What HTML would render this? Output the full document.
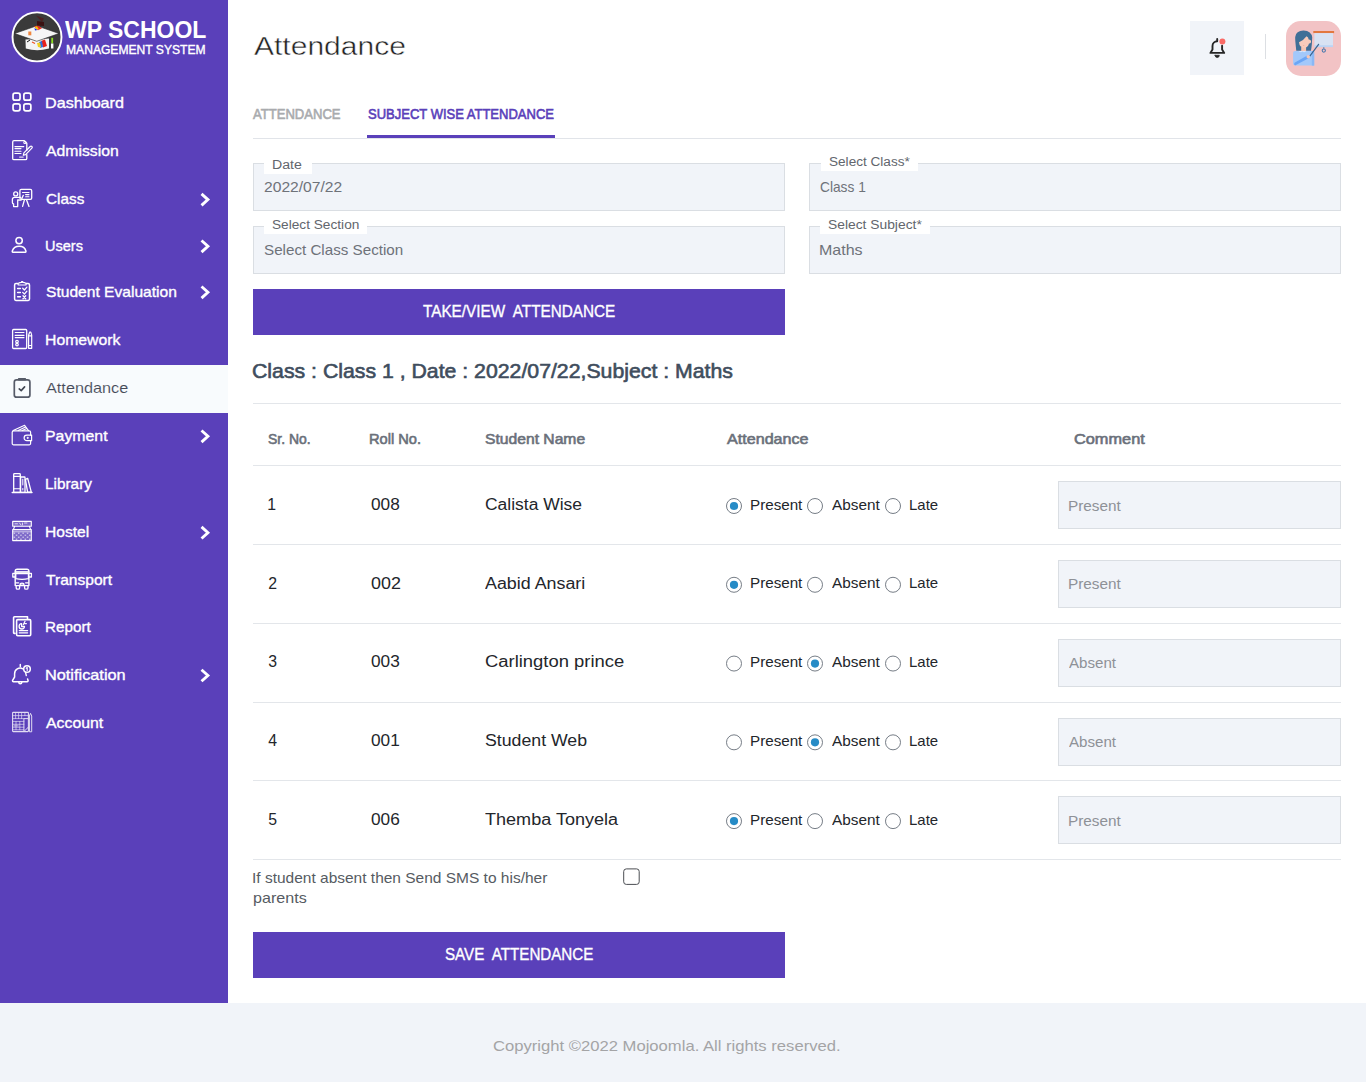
<!DOCTYPE html>
<html><head><meta charset="utf-8">
<style>
*{box-sizing:border-box;margin:0;padding:0}
html,body{width:1366px;height:1084px;overflow:hidden;background:#fff;font-family:"Liberation Sans",sans-serif}
.bx{position:absolute}
.tx{position:absolute;white-space:nowrap;font-family:"Liberation Sans",sans-serif}
svg{position:absolute;left:0;top:0}
</style></head>
<body>
<div class="bx" style="left:0px;top:0px;width:228.00px;height:1003.00px;background:#5a40ba"></div>
<div class="bx" style="left:0px;top:365px;width:228.00px;height:48.00px;background:#f8fbfd"></div>
<div class="bx" style="left:1190px;top:21px;width:54.00px;height:54.00px;background:#f1f4f9"></div>
<div class="bx" style="left:1264.5px;top:34px;width:1.50px;height:25.00px;background:#dcdfe3"></div>
<div class="bx" style="left:1286px;top:21px;width:55.00px;height:55.00px;background:#f2c3c5;border-radius:15px"></div>
<div class="bx" style="left:253px;top:138px;width:1088.00px;height:1.00px;background:#e1e4e9"></div>
<div class="bx" style="left:367px;top:135px;width:188.00px;height:3.00px;background:#5a40ba"></div>
<div class="bx" style="left:253px;top:163px;width:532.00px;height:48.00px;background:#f1f4f9;border:1px solid #dadee3"></div>
<div class="bx" style="left:809px;top:163px;width:532.00px;height:48.00px;background:#f1f4f9;border:1px solid #dadee3"></div>
<div class="bx" style="left:253px;top:226px;width:532.00px;height:48.00px;background:#f1f4f9;border:1px solid #dadee3"></div>
<div class="bx" style="left:809px;top:226px;width:532.00px;height:48.00px;background:#f1f4f9;border:1px solid #dadee3"></div>
<div class="bx" style="left:264px;top:157px;width:48.00px;height:17.00px;background:#fff"></div>
<div class="bx" style="left:821px;top:153px;width:97.00px;height:17.50px;background:#fff"></div>
<div class="bx" style="left:264px;top:217px;width:103.00px;height:16.70px;background:#fff"></div>
<div class="bx" style="left:820px;top:217px;width:110.00px;height:16.70px;background:#fff"></div>
<div class="bx" style="left:253px;top:289px;width:532.00px;height:46.00px;background:#5a40ba"></div>
<div class="bx" style="left:253px;top:403px;width:1088.00px;height:1.00px;background:#e3e6ea"></div>
<div class="bx" style="left:253px;top:465px;width:1088.00px;height:1.00px;background:#e3e6ea"></div>
<div class="bx" style="left:253px;top:544px;width:1088.00px;height:1.00px;background:#e3e6ea"></div>
<div class="bx" style="left:1058px;top:481px;width:283.00px;height:48.00px;background:#f1f4f9;border:1px solid #dadee3"></div>
<div class="bx" style="left:253px;top:623px;width:1088.00px;height:1.00px;background:#e3e6ea"></div>
<div class="bx" style="left:1058px;top:560px;width:283.00px;height:48.00px;background:#f1f4f9;border:1px solid #dadee3"></div>
<div class="bx" style="left:253px;top:702px;width:1088.00px;height:1.00px;background:#e3e6ea"></div>
<div class="bx" style="left:1058px;top:639px;width:283.00px;height:48.00px;background:#f1f4f9;border:1px solid #dadee3"></div>
<div class="bx" style="left:253px;top:780px;width:1088.00px;height:1.00px;background:#e3e6ea"></div>
<div class="bx" style="left:1058px;top:718px;width:283.00px;height:48.00px;background:#f1f4f9;border:1px solid #dadee3"></div>
<div class="bx" style="left:253px;top:859px;width:1088.00px;height:1.00px;background:#e3e6ea"></div>
<div class="bx" style="left:1058px;top:796px;width:283.00px;height:48.00px;background:#f1f4f9;border:1px solid #dadee3"></div>
<div class="bx" style="left:253px;top:932px;width:532.00px;height:46.00px;background:#5a40ba"></div>
<div class="bx" style="left:0px;top:1003px;width:1366.00px;height:78.50px;background:#f1f4f9"></div>
<svg width="1366" height="1084" viewBox="0 0 1366 1084" style="position:absolute;left:0;top:0">
<circle cx="37" cy="36.9" r="24.5" fill="#3a3a3a" stroke="#fff" stroke-width="1.9"/>
<path d="M25.5,39.5 L25.8,48.5 Q37,52 49,48.5 L49,38.5 Z" fill="#f4f4f4"/>
<path d="M14.6,33.5 L36.8,25.8 L59,33.5 L36.8,41.3 Z" fill="#f6f6f6" stroke="#222" stroke-width="0.6"/>
<path d="M34,26.5 L38,25.5 L42,28.2 L38,30.2 Z" fill="#e62a1e"/><path d="M35,26.8 L37,26.2 L39,29.5 L36,29 Z" fill="#f2c90f"/><path d="M34.5,28 L37.5,30 L35,30.5 Z" fill="#1a2be0"/>
<rect x="28.3" y="31.5" width="3" height="3.8" fill="#f07a2a" opacity="0.9"/>
<path d="M41,41 L45,39.5 L47,46 L43,47.5 Z" fill="#e8201a"/><path d="M39,42 L42,41 L43,47 L40,48 Z" fill="#2a6de0"/><path d="M37,43 L40,42.5 L41,47.5 L38,47 Z" fill="#f0d020"/>
<path d="M32,42 L35,43.5" stroke="#f05020" stroke-width="1.2"/><path d="M27,42 L30,40" stroke="#111" stroke-width="1"/>
<rect x="51.3" y="37.8" width="1.8" height="5.5" fill="#8ee020"/><rect x="51" y="43.5" width="2.4" height="5" fill="#fff"/>
<path d="M36,15.5 L44,18.5 L42,22 Z" fill="#5a1010" opacity="0.6"/><path d="M37,21 L44,22 L44,26 L37,25.5 Z" fill="#3a0808" opacity="0.8"/>
<g fill="none" stroke="#fff" stroke-linecap="round" stroke-linejoin="round">
<rect x="13.05" y="93.15" width="7.0" height="7.0" rx="2" stroke-width="1.7"/>
<rect x="13.05" y="103.85" width="7.0" height="7.0" rx="2" stroke-width="1.7"/>
<rect x="23.85" y="93.15" width="7.0" height="7.0" rx="2" stroke-width="1.7"/>
<rect x="23.85" y="103.85" width="7.0" height="7.0" rx="2" stroke-width="1.7"/>
<path d="M24.3,140.7 H14 a1.3,1.3 0 0 0 -1.3,1.3 V158.4 a1.3,1.3 0 0 0 1.3,1.3 H25.5 a1.3,1.3 0 0 0 1.3,-1.3 V154.6 M26.8,150.2 V143.2 L24.3,140.7" stroke-width="1.3"/>
<circle cx="24.9" cy="142.4" r="1.1" stroke-width="1.1"/>
<path d="M14.9,146.6 H23.8 M14.9,148.6 H21 M14.9,151.3 H21 M14.9,153.5 H21" stroke-width="1.1"/>
<path d="M23.3,155.3 L23.9,152.9 L30.2,146.5 a1.2,1.2 0 0 1 1.7,1.7 L25.6,154.6 Z" stroke-width="1.2"/>
<path d="M19.6,157.1 H23.2" stroke-width="1.1" opacity="0.8"/>
<circle cx="15.7" cy="193.9" r="2.0" stroke-width="1.3"/>
<path d="M20.6,197.4 H14.3 a1.9,1.9 0 0 0 -1.9,1.9 V202.6 a1.4,1.4 0 0 0 1.2,1.4 V206.6 H17.7 V199.8 L21.2,200.1 L23.3,195.3" stroke-width="1.3"/>
<rect x="19.9" y="189.4" width="11.8" height="9.9" rx="1.4" stroke-width="1.3"/>
<path d="M22.5,192.5 H29 M25.6,194.6 H29 M25.6,196.7 H29" stroke-width="1.1"/>
<path d="M24.5,199.6 L22.6,206.4 M26.4,199.6 L29.0,206.4" stroke-width="1.3"/>
<circle cx="19.1" cy="240.6" r="3.2" stroke-width="1.5"/>
<path d="M12.9,252.3 H25.3 a0.8,0.8 0 0 0 0.7,-1.1 C25,247.6 22.6,246.3 19.2,246.3 C15.8,246.3 13.4,247.6 12.2,251.2 a0.8,0.8 0 0 0 0.7,1.1 Z" stroke-width="1.5"/>
<path d="M17.6,283.6 H16 a1.4,1.4 0 0 0 -1.4,1.4 V299.1 a1.3,1.3 0 0 0 1.3,1.3 H28.2 a1.3,1.3 0 0 0 1.3,-1.3 V285 a1.4,1.4 0 0 0 -1.4,-1.4 H26.4" stroke-width="1.5"/>
<path d="M18.3,285 L17.9,283.6 Q20,282.4 21.6,282.4 V281.6 H22.8 V282.4 Q24.4,282.4 26.3,283.6 L25.9,285 Z" stroke-width="1.2"/>
<path d="M17.6,288.6 H20.4 M17.6,292.6 H20.4 M17.6,296.8 H20.4" stroke-width="1.5"/>
<path d="M22.7,288.3 L24.4,290 L26.9,287.1 M22.7,292.4 L24.4,294.1 L26.9,291.2" stroke-width="1.3"/>
<path d="M23,295.7 L25.7,298.8 M25.7,295.7 L23,298.8" stroke-width="1.3"/>
<rect x="12.6" y="329.5" width="14.1" height="19" rx="1" stroke-width="1.3"/>
<path d="M15.2,332.5 H24 M15.2,335.4 H24 M15.2,337.6 H24" stroke-width="1.1"/>
<circle cx="17" cy="341.6" r="1.3" stroke-width="1.2"/><circle cx="17" cy="344.6" r="1.3" stroke-width="1.2"/>
<path d="M28.6,348.3 V335.2 L29.6,332.2 H30.8 L31.7,335.2 V348.3 Z M28.6,335.8 H31.7 M28.6,345.5 H31.7" stroke-width="1.2"/>
<path d="M30.6,435.2 V432.2 a1.4,1.4 0 0 0 -1.4,-1.4 H13.6 a1.4,1.4 0 0 0 -1.4,1.4 V443.4 a1.4,1.4 0 0 0 1.4,1.4 H29.2 a1.4,1.4 0 0 0 1.4,-1.4 V440.7" stroke-width="1.2"/>
<path d="M13.2,430.6 L24.6,425.3 L28.5,430.6 M18.2,430.6 L25.5,427.1 M22.2,430.6 L26.8,428.4" stroke-width="1.1"/>
<path d="M31.6,435.1 H26.9 a2.8,2.8 0 0 0 0,5.6 H31.6 Z" stroke-width="1.2"/>
<circle cx="27.6" cy="437.9" r="0.6" fill="#fff" stroke-width="0.8"/>
<rect x="13.7" y="473.6" width="6.6" height="18.7" rx="0.8" stroke-width="1.3"/>
<path d="M13.7,476.4 H20.3 M13.7,488.8 H20.3" stroke-width="1.1"/>
<rect x="20.6" y="477.0" width="4.4" height="15.3" rx="0.5" stroke-width="1.3"/>
<path d="M22.8,479.2 V485 M22.8,488.5 V490" stroke-width="1.0"/>
<path d="M25.4,479.3 L27.7,478.4 L31.3,492.1 H27.6 Z" stroke-width="1.3"/>
<path d="M12.2,492.5 H32" stroke-width="1.4"/>
<rect x="12.7" y="521.4" width="18.6" height="4.9" stroke-width="1.1" fill="#fff" fill-opacity="0.2"/>
<path d="M15,523.8 H17.5 M19.5,523 L21,525 M22.5,523 V525 M24.5,523 H27" stroke-width="0.9" opacity="0.8"/>
<path d="M14.6,526.4 L13.5,529.2 M29.4,526.4 L30.5,529.2" stroke-width="1.1"/>
<rect x="12.7" y="529.6" width="18.6" height="11.0" stroke-width="1.1" fill="#fff" fill-opacity="0.22"/>
<path d="M12.7,531.8 H31.3" stroke-width="0.9" opacity="0.7"/>
</g>
<rect x="13.60" y="532.60" width="1.5" height="1.3" fill="#fff" opacity="0.6"/>
<rect x="18.00" y="532.60" width="1.5" height="1.3" fill="#fff" opacity="0.6"/>
<rect x="22.40" y="532.60" width="1.5" height="1.3" fill="#fff" opacity="0.6"/>
<rect x="26.80" y="532.60" width="1.5" height="1.3" fill="#fff" opacity="0.6"/>
<rect x="15.80" y="534.60" width="1.5" height="1.3" fill="#fff" opacity="0.6"/>
<rect x="20.20" y="534.60" width="1.5" height="1.3" fill="#fff" opacity="0.6"/>
<rect x="24.60" y="534.60" width="1.5" height="1.3" fill="#fff" opacity="0.6"/>
<rect x="29.00" y="534.60" width="1.5" height="1.3" fill="#fff" opacity="0.6"/>
<rect x="13.60" y="536.60" width="1.5" height="1.3" fill="#fff" opacity="0.6"/>
<rect x="18.00" y="536.60" width="1.5" height="1.3" fill="#fff" opacity="0.6"/>
<rect x="22.40" y="536.60" width="1.5" height="1.3" fill="#fff" opacity="0.6"/>
<rect x="26.80" y="536.60" width="1.5" height="1.3" fill="#fff" opacity="0.6"/>
<rect x="15.80" y="538.60" width="1.5" height="1.3" fill="#fff" opacity="0.6"/>
<rect x="20.20" y="538.60" width="1.5" height="1.3" fill="#fff" opacity="0.6"/>
<rect x="24.60" y="538.60" width="1.5" height="1.3" fill="#fff" opacity="0.6"/>
<rect x="29.00" y="538.60" width="1.5" height="1.3" fill="#fff" opacity="0.6"/>
<g fill="none" stroke="#fff" stroke-linecap="round" stroke-linejoin="round">
<path d="M15.2,585.6 V571.3 a2,2 0 0 1 2,-2 H26.9 a2,2 0 0 1 2,2 V585.6 Z" stroke-width="1.4"/>
<path d="M15.6,572 H28.6" stroke-width="1.8" opacity="0.85"/>
<path d="M15.8,573.6 H28.4 V578.6 Q22,580 15.8,578.6 Z" stroke-width="1.2"/>
<path d="M15,573.4 H12.8 V577 H15 M29.1,573.4 H31.4 V577 H29.1" stroke-width="1.3"/>
<path d="M15.8,582.8 H18.6 M25.6,582.8 H28.4" stroke-width="1.2"/>
<ellipse cx="22" cy="584.2" rx="2.1" ry="1.0" stroke-width="1.2"/>
<path d="M16.2,585.8 V587.9 a1.3,1.3 0 0 0 1.3,1.3 H18.3 a1.3,1.3 0 0 0 1.3,-1.3 V585.8 M24.6,585.8 V587.9 a1.3,1.3 0 0 0 1.3,1.3 H26.7 a1.3,1.3 0 0 0 1.3,-1.3 V585.8" stroke-width="1.3"/>
<path d="M15,633.4 H14.2 a0.6,0.6 0 0 1 -0.6,-0.6 V617.7 a0.9,0.9 0 0 1 0.9,-0.9 H27.5 V618.9" stroke-width="1.6"/>
<rect x="16.6" y="619.6" width="14.1" height="16.1" rx="1.1" stroke-width="1.6"/>
<path d="M21.6,623.6 a2.7,2.7 0 1 0 2.9,2.9 H21.6 Z" stroke-width="1.3"/>
<path d="M23.4,624.6 L25,621.3 M24.6,623.6 L26.4,623.6" stroke-width="1.2"/>
<path d="M19.3,630.6 H27.6 M19.3,632.8 H27.6" stroke-width="1.3"/>
<path d="M22.8,668.8 A5.6,5.6 0 0 0 14.6,673.8 V677 L12.6,680.4 a1,1 0 0 0 0.9,1.4 H27.1 a1,1 0 0 0 0.9,-1.4 L27.6,679" stroke-width="1.5"/>
<path d="M20.3,666.5 V664.6 M18.8,682.2 a1.5,1.5 0 0 0 3,0" stroke-width="1.5"/>
<circle cx="27" cy="669" r="3.3" stroke-width="1.5"/>
<path d="M26.2,668.2 L27.2,667.4 V670.4" stroke-width="1.1"/>
<path d="M25.5,672.2 L26.3,675.6" stroke-width="1.4"/>
<g opacity="0.82">
<rect x="12.6" y="712.4" width="15.8" height="19.2" rx="0.6" stroke-width="1.1"/>
<path d="M28.2,718.6 H23.9 V731.6" stroke-width="1.0"/>
<path d="M12.6,715.6 H28.2 M12.6,718.6 H23.9 M12.6,721.4 H23.9 M12.6,724.3 H23.9 M12.6,727.2 H23.9 M12.6,729.8 H23.9" stroke-width="0.7"/>
<path d="M15.6,712.4 V718.6 M18.6,712.4 V718.6 M21.6,712.4 V718.6 M24.9,712.4 V715.6 M16,721.4 V729.8 M19.8,721.4 V729.8" stroke-width="0.7"/>
<rect x="13.6" y="725" width="5" height="1.6" fill="#fff" opacity="0.5" stroke="none"/>
<path d="M29.4,731.4 V716 L30.5,713.3 L31.7,716 V731.4 Z" stroke-width="1.0"/>
<path d="M24.5,731 L28.5,727" stroke-width="1.0"/>
</g>
</g>
<g fill="none" stroke="#565b68" stroke-linecap="round" stroke-linejoin="round">
<rect x="14.3" y="379.9" width="15.6" height="17.3" rx="2.3" stroke-width="1.7"/>
</g>
<rect x="17.9" y="377.9" width="8.2" height="2.6" rx="0.9" fill="#565b68"/>
<path d="M19.2,388.9 L21.2,390.6 L24.6,386.9" fill="none" stroke="#3f4450" stroke-width="1.6" stroke-linecap="round" stroke-linejoin="round"/>
<path d="M202.6,194.80 L207.9,199.60 L202.6,204.40" fill="none" stroke="#fff" stroke-width="2.9" stroke-linecap="square" stroke-linejoin="miter"/>
<path d="M202.6,241.50 L207.9,246.30 L202.6,251.10" fill="none" stroke="#fff" stroke-width="2.9" stroke-linecap="square" stroke-linejoin="miter"/>
<path d="M202.6,287.50 L207.9,292.30 L202.6,297.10" fill="none" stroke="#fff" stroke-width="2.9" stroke-linecap="square" stroke-linejoin="miter"/>
<path d="M202.6,431.50 L207.9,436.30 L202.6,441.10" fill="none" stroke="#fff" stroke-width="2.9" stroke-linecap="square" stroke-linejoin="miter"/>
<path d="M202.6,527.90 L207.9,532.70 L202.6,537.50" fill="none" stroke="#fff" stroke-width="2.9" stroke-linecap="square" stroke-linejoin="miter"/>
<path d="M202.6,670.70 L207.9,675.50 L202.6,680.30" fill="none" stroke="#fff" stroke-width="2.9" stroke-linecap="square" stroke-linejoin="miter"/>
<g fill="none" stroke="#262626" stroke-linecap="round" stroke-linejoin="round">
<path d="M1217.2,38.9 V40.9 M1217.2,41.3 A4.7,4.7 0 0 0 1212.5,46 V49.6 L1210.4,52.9 H1224.2 L1222.1,49.6 V45.8" stroke-width="1.9"/>
<path d="M1215.1,55.3 H1219.3 A2.1,2.2 0 0 1 1215.1,55.3 Z" fill="#262626" stroke="#262626" stroke-width="0.8"/>
</g>
<circle cx="1222.4" cy="41.4" r="3.0" fill="#fa6a66"/>
<rect x="1313.3" y="31" width="20.8" height="2.1" fill="#e2773f"/>
<rect x="1314.4" y="33.1" width="18.6" height="13.9" fill="#d8e2f3"/>
<rect x="1314.4" y="45.2" width="18.6" height="1.9" fill="#bcd4f4"/>
<path d="M1323.8,47 V49" stroke="#4b79ad" stroke-width="0.8"/>
<circle cx="1323.8" cy="50.6" r="1.6" fill="none" stroke="#4b79ad" stroke-width="1.1"/>
<path d="M1296.3,50.7 Q1295,40 1295.2,37 Q1296,30.5 1303.5,30.5 Q1311.5,30.8 1312.2,37.5 Q1312.2,43 1311,50.7 Z" fill="#3f6f97"/>
<path d="M1301.2,47 H1306.1 V51.3 H1301.2 Z" fill="#f6c4b2"/>
<path d="M1299,42.3 Q1303.5,40.5 1306.5,36.3 Q1308.5,37 1308.7,39.5 Q1311.5,39.8 1311,42.2 Q1310.3,43.8 1309,43.5 Q1307.8,47.8 1304,47.9 Q1299.5,47.5 1299,42.3 Z" fill="#f8cbbb"/>
<path d="M1302.8,45 Q1303.6,45.8 1304.6,45 Z" fill="#e08b7c"/>
<path d="M1293.1,53 Q1293.1,50.9 1295.3,50.9 H1312 Q1314.2,50.9 1314.2,53 V65.6 H1295.5 Q1293.1,65.6 1293.1,63.5 Z" fill="#a2c8fa"/>
<path d="M1298.5,51 Q1300.5,53 1302.5,51.5 Q1304.5,53 1306.5,51 Z" fill="#d6e6fb"/>
<rect x="1311.8" y="51" width="2.4" height="14.6" fill="#8ab8f6"/>
<path d="M1295,65.4 Q1293.3,64.5 1294.5,62.8 L1307.3,55.6 L1308.6,58.2 Z" fill="#6ba6f6"/>
<path d="M1310,55.8 L1318.6,44.3" stroke="#3a6590" stroke-width="1.2" fill="none" stroke-linecap="round"/>
<circle cx="1308.2" cy="56.8" r="1.7" fill="#f8c7b5"/>
<circle cx="734.0" cy="506.00" r="7.5" fill="#fff" stroke="#767d86" stroke-width="1"/>
<circle cx="734.0" cy="506.00" r="4.1" fill="#268bc6"/>
<circle cx="815.0" cy="506.00" r="7.5" fill="#fff" stroke="#767d86" stroke-width="1"/>
<circle cx="893.0" cy="506.00" r="7.5" fill="#fff" stroke="#767d86" stroke-width="1"/>
<circle cx="734.0" cy="584.78" r="7.5" fill="#fff" stroke="#767d86" stroke-width="1"/>
<circle cx="734.0" cy="584.78" r="4.1" fill="#268bc6"/>
<circle cx="815.0" cy="584.78" r="7.5" fill="#fff" stroke="#767d86" stroke-width="1"/>
<circle cx="893.0" cy="584.78" r="7.5" fill="#fff" stroke="#767d86" stroke-width="1"/>
<circle cx="734.0" cy="663.56" r="7.5" fill="#fff" stroke="#767d86" stroke-width="1"/>
<circle cx="815.0" cy="663.56" r="7.5" fill="#fff" stroke="#767d86" stroke-width="1"/>
<circle cx="815.0" cy="663.56" r="4.1" fill="#268bc6"/>
<circle cx="893.0" cy="663.56" r="7.5" fill="#fff" stroke="#767d86" stroke-width="1"/>
<circle cx="734.0" cy="742.34" r="7.5" fill="#fff" stroke="#767d86" stroke-width="1"/>
<circle cx="815.0" cy="742.34" r="7.5" fill="#fff" stroke="#767d86" stroke-width="1"/>
<circle cx="815.0" cy="742.34" r="4.1" fill="#268bc6"/>
<circle cx="893.0" cy="742.34" r="7.5" fill="#fff" stroke="#767d86" stroke-width="1"/>
<circle cx="734.0" cy="821.12" r="7.5" fill="#fff" stroke="#767d86" stroke-width="1"/>
<circle cx="734.0" cy="821.12" r="4.1" fill="#268bc6"/>
<circle cx="815.0" cy="821.12" r="7.5" fill="#fff" stroke="#767d86" stroke-width="1"/>
<circle cx="893.0" cy="821.12" r="7.5" fill="#fff" stroke="#767d86" stroke-width="1"/>
<rect x="623.7" y="868.9" width="15.5" height="15.5" rx="2.6" fill="#fff" stroke="#4a4d52" stroke-width="1"/>
</svg>
<div class="tx" style="left:44.82px;top:93.80px;font-size:15px;line-height:18px;font-weight:400;color:#ffffff;transform:scaleX(1.0758);transform-origin:0 0;-webkit-text-stroke:0.35px #ffffff;">Dashboard</div>
<div class="tx" style="left:45.90px;top:142.10px;font-size:15px;line-height:18px;font-weight:400;color:#ffffff;transform:scaleX(1.0501);transform-origin:0 0;-webkit-text-stroke:0.35px #ffffff;">Admission</div>
<div class="tx" style="left:45.90px;top:190.10px;font-size:15px;line-height:18px;font-weight:400;color:#ffffff;transform:scaleX(1.0214);transform-origin:0 0;-webkit-text-stroke:0.35px #ffffff;">Class</div>
<div class="tx" style="left:44.93px;top:236.80px;font-size:15px;line-height:18px;font-weight:400;color:#ffffff;transform:scaleX(0.9689);transform-origin:0 0;-webkit-text-stroke:0.35px #ffffff;">Users</div>
<div class="tx" style="left:45.90px;top:282.80px;font-size:15px;line-height:18px;font-weight:400;color:#ffffff;transform:scaleX(1.0392);transform-origin:0 0;-webkit-text-stroke:0.35px #ffffff;">Student Evaluation</div>
<div class="tx" style="left:44.85px;top:330.80px;font-size:15px;line-height:18px;font-weight:400;color:#ffffff;transform:scaleX(1.0508);transform-origin:0 0;-webkit-text-stroke:0.35px #ffffff;">Homework</div>
<div class="tx" style="left:46.10px;top:378.90px;font-size:15px;line-height:18px;font-weight:400;color:#454a57;transform:scaleX(1.0840);transform-origin:0 0;-webkit-text-stroke:0.12px #f8fbfd;">Attendance</div>
<div class="tx" style="left:44.84px;top:426.80px;font-size:15px;line-height:18px;font-weight:400;color:#ffffff;transform:scaleX(1.0571);transform-origin:0 0;-webkit-text-stroke:0.35px #ffffff;">Payment</div>
<div class="tx" style="left:44.88px;top:475.20px;font-size:15px;line-height:18px;font-weight:400;color:#ffffff;transform:scaleX(1.0232);transform-origin:0 0;-webkit-text-stroke:0.35px #ffffff;">Library</div>
<div class="tx" style="left:44.86px;top:523.20px;font-size:15px;line-height:18px;font-weight:400;color:#ffffff;transform:scaleX(1.0368);transform-origin:0 0;-webkit-text-stroke:0.35px #ffffff;">Hostel</div>
<div class="tx" style="left:45.90px;top:570.80px;font-size:15px;line-height:18px;font-weight:400;color:#ffffff;transform:scaleX(1.0393);transform-origin:0 0;-webkit-text-stroke:0.35px #ffffff;">Transport</div>
<div class="tx" style="left:44.89px;top:618.40px;font-size:15px;line-height:18px;font-weight:400;color:#ffffff;transform:scaleX(1.0144);transform-origin:0 0;-webkit-text-stroke:0.35px #ffffff;">Report</div>
<div class="tx" style="left:44.81px;top:666.00px;font-size:15px;line-height:18px;font-weight:400;color:#ffffff;transform:scaleX(1.0870);transform-origin:0 0;-webkit-text-stroke:0.35px #ffffff;">Notification</div>
<div class="tx" style="left:45.90px;top:713.80px;font-size:15px;line-height:18px;font-weight:400;color:#ffffff;transform:scaleX(1.0558);transform-origin:0 0;-webkit-text-stroke:0.35px #ffffff;">Account</div>
<div class="tx" style="left:65.20px;top:15.62px;font-size:23.6px;line-height:28px;font-weight:700;color:#fff;transform:scaleX(0.9746);transform-origin:0 0;">WP SCHOOL</div>
<div class="tx" style="left:66.00px;top:43.44px;font-size:12.0px;line-height:14px;font-weight:400;color:#fff;transform:scaleX(1.0081);transform-origin:0 0;-webkit-text-stroke:0.35px #fff;">MANAGEMENT SYSTEM</div>
<div class="tx" style="left:254.00px;top:31.20px;font-size:25.1px;line-height:30px;font-weight:400;color:#222222;transform:scaleX(1.1960);transform-origin:0 0;-webkit-text-stroke:0.45px #fff;">Attendance</div>
<div class="tx" style="left:253.20px;top:105.78px;font-size:14.5px;line-height:17px;font-weight:400;color:#a9abae;transform:scaleX(0.9002);transform-origin:0 0;-webkit-text-stroke:0.6px #a9abae;">ATTENDANCE</div>
<div class="tx" style="left:367.80px;top:105.78px;font-size:14.5px;line-height:17px;font-weight:400;color:#5a40ba;transform:scaleX(0.8969);transform-origin:0 0;-webkit-text-stroke:0.6px #5a40ba;">SUBJECT WISE ATTENDANCE</div>
<div class="tx" style="left:272.25px;top:158.04px;font-size:12.3px;line-height:15px;font-weight:400;color:#62666d;transform:scaleX(1.1498);transform-origin:0 0;">Date</div>
<div class="tx" style="left:828.80px;top:155.14px;font-size:12.3px;line-height:15px;font-weight:400;color:#62666d;transform:scaleX(1.1044);transform-origin:0 0;">Select Class*</div>
<div class="tx" style="left:272.00px;top:218.04px;font-size:12.3px;line-height:15px;font-weight:400;color:#62666d;transform:scaleX(1.1108);transform-origin:0 0;">Select Section</div>
<div class="tx" style="left:827.50px;top:218.04px;font-size:12.3px;line-height:15px;font-weight:400;color:#62666d;transform:scaleX(1.1243);transform-origin:0 0;">Select Subject*</div>
<div class="tx" style="left:263.90px;top:177.94px;font-size:14.6px;line-height:18px;font-weight:400;color:#6e7279;transform:scaleX(1.0710);transform-origin:0 0;">2022/07/22</div>
<div class="tx" style="left:820.20px;top:177.74px;font-size:14.6px;line-height:18px;font-weight:400;color:#6e7279;transform:scaleX(0.9414);transform-origin:0 0;">Class 1</div>
<div class="tx" style="left:264.20px;top:240.64px;font-size:14.6px;line-height:18px;font-weight:400;color:#6e7279;transform:scaleX(1.0402);transform-origin:0 0;">Select Class Section</div>
<div class="tx" style="left:819.10px;top:240.84px;font-size:14.6px;line-height:18px;font-weight:400;color:#6e7279;transform:scaleX(1.0977);transform-origin:0 0;">Maths</div>
<div class="tx" style="left:422.70px;top:301.96px;font-size:16px;line-height:19px;font-weight:400;color:#fff;transform:scaleX(0.9552);transform-origin:0 0;-webkit-text-stroke:0.35px #fff;">TAKE/VIEW  ATTENDANCE</div>
<div class="tx" style="left:252.25px;top:358.80px;font-size:20.2px;line-height:24px;font-weight:400;color:#404d5d;transform:scaleX(1.0531);transform-origin:0 0;-webkit-text-stroke:0.6px #404d5d;">Class : Class 1 , Date : 2022/07/22,Subject : Maths</div>
<div class="tx" style="left:267.80px;top:430.44px;font-size:14.6px;line-height:18px;font-weight:400;color:#6a707a;transform:scaleX(0.9552);transform-origin:0 0;-webkit-text-stroke:0.6px #6a707a;">Sr. No.</div>
<div class="tx" style="left:369.40px;top:430.44px;font-size:14.6px;line-height:18px;font-weight:400;color:#6a707a;transform:scaleX(1.0030);transform-origin:0 0;-webkit-text-stroke:0.6px #6a707a;">Roll No.</div>
<div class="tx" style="left:484.80px;top:430.44px;font-size:14.6px;line-height:18px;font-weight:400;color:#6a707a;transform:scaleX(1.0732);transform-origin:0 0;-webkit-text-stroke:0.6px #6a707a;">Student Name</div>
<div class="tx" style="left:726.80px;top:430.44px;font-size:14.6px;line-height:18px;font-weight:400;color:#6a707a;transform:scaleX(1.1042);transform-origin:0 0;-webkit-text-stroke:0.6px #6a707a;">Attendance</div>
<div class="tx" style="left:1073.50px;top:430.44px;font-size:14.6px;line-height:18px;font-weight:400;color:#6a707a;transform:scaleX(1.1186);transform-origin:0 0;-webkit-text-stroke:0.6px #6a707a;">Comment</div>
<div class="tx" style="left:267.30px;top:494.93px;font-size:15.8px;line-height:19px;font-weight:400;color:#23262b;">1</div>
<div class="tx" style="left:371.00px;top:494.93px;font-size:15.8px;line-height:19px;font-weight:400;color:#23262b;transform:scaleX(1.0914);transform-origin:0 0;">008</div>
<div class="tx" style="left:484.70px;top:494.93px;font-size:15.8px;line-height:19px;font-weight:400;color:#23262b;transform:scaleX(1.1058);transform-origin:0 0;">Calista Wise</div>
<div class="tx" style="left:749.94px;top:496.65px;font-size:14.3px;line-height:17px;font-weight:400;color:#23262b;transform:scaleX(1.0621);transform-origin:0 0;">Present</div>
<div class="tx" style="left:832.40px;top:496.65px;font-size:14.3px;line-height:17px;font-weight:400;color:#23262b;transform:scaleX(1.0732);transform-origin:0 0;">Absent</div>
<div class="tx" style="left:909.35px;top:496.65px;font-size:14.3px;line-height:17px;font-weight:400;color:#23262b;transform:scaleX(1.0456);transform-origin:0 0;">Late</div>
<div class="tx" style="left:1068.35px;top:496.54px;font-size:14.6px;line-height:18px;font-weight:400;color:#8e9197;transform:scaleX(1.0500);transform-origin:0 0;">Present</div>
<div class="tx" style="left:268.30px;top:573.71px;font-size:15.8px;line-height:19px;font-weight:400;color:#23262b;">2</div>
<div class="tx" style="left:371.00px;top:573.71px;font-size:15.8px;line-height:19px;font-weight:400;color:#23262b;transform:scaleX(1.1341);transform-origin:0 0;">002</div>
<div class="tx" style="left:484.70px;top:573.71px;font-size:15.8px;line-height:19px;font-weight:400;color:#23262b;transform:scaleX(1.1307);transform-origin:0 0;">Aabid Ansari</div>
<div class="tx" style="left:749.94px;top:575.43px;font-size:14.3px;line-height:17px;font-weight:400;color:#23262b;transform:scaleX(1.0621);transform-origin:0 0;">Present</div>
<div class="tx" style="left:832.40px;top:575.43px;font-size:14.3px;line-height:17px;font-weight:400;color:#23262b;transform:scaleX(1.0732);transform-origin:0 0;">Absent</div>
<div class="tx" style="left:909.35px;top:575.43px;font-size:14.3px;line-height:17px;font-weight:400;color:#23262b;transform:scaleX(1.0456);transform-origin:0 0;">Late</div>
<div class="tx" style="left:1068.35px;top:575.32px;font-size:14.6px;line-height:18px;font-weight:400;color:#8e9197;transform:scaleX(1.0500);transform-origin:0 0;">Present</div>
<div class="tx" style="left:268.30px;top:652.49px;font-size:15.8px;line-height:19px;font-weight:400;color:#23262b;">3</div>
<div class="tx" style="left:371.00px;top:652.49px;font-size:15.8px;line-height:19px;font-weight:400;color:#23262b;transform:scaleX(1.0914);transform-origin:0 0;">003</div>
<div class="tx" style="left:484.70px;top:652.49px;font-size:15.8px;line-height:19px;font-weight:400;color:#23262b;transform:scaleX(1.1661);transform-origin:0 0;">Carlington prince</div>
<div class="tx" style="left:749.94px;top:654.21px;font-size:14.3px;line-height:17px;font-weight:400;color:#23262b;transform:scaleX(1.0621);transform-origin:0 0;">Present</div>
<div class="tx" style="left:832.40px;top:654.21px;font-size:14.3px;line-height:17px;font-weight:400;color:#23262b;transform:scaleX(1.0732);transform-origin:0 0;">Absent</div>
<div class="tx" style="left:909.35px;top:654.21px;font-size:14.3px;line-height:17px;font-weight:400;color:#23262b;transform:scaleX(1.0456);transform-origin:0 0;">Late</div>
<div class="tx" style="left:1069.40px;top:654.10px;font-size:14.6px;line-height:18px;font-weight:400;color:#8e9197;transform:scaleX(1.0357);transform-origin:0 0;">Absent</div>
<div class="tx" style="left:268.30px;top:731.27px;font-size:15.8px;line-height:19px;font-weight:400;color:#23262b;">4</div>
<div class="tx" style="left:371.00px;top:731.27px;font-size:15.8px;line-height:19px;font-weight:400;color:#23262b;transform:scaleX(1.0914);transform-origin:0 0;">001</div>
<div class="tx" style="left:484.70px;top:731.27px;font-size:15.8px;line-height:19px;font-weight:400;color:#23262b;transform:scaleX(1.1210);transform-origin:0 0;">Student Web</div>
<div class="tx" style="left:749.94px;top:732.99px;font-size:14.3px;line-height:17px;font-weight:400;color:#23262b;transform:scaleX(1.0621);transform-origin:0 0;">Present</div>
<div class="tx" style="left:832.40px;top:732.99px;font-size:14.3px;line-height:17px;font-weight:400;color:#23262b;transform:scaleX(1.0732);transform-origin:0 0;">Absent</div>
<div class="tx" style="left:909.35px;top:732.99px;font-size:14.3px;line-height:17px;font-weight:400;color:#23262b;transform:scaleX(1.0456);transform-origin:0 0;">Late</div>
<div class="tx" style="left:1069.40px;top:732.88px;font-size:14.6px;line-height:18px;font-weight:400;color:#8e9197;transform:scaleX(1.0357);transform-origin:0 0;">Absent</div>
<div class="tx" style="left:268.30px;top:810.05px;font-size:15.8px;line-height:19px;font-weight:400;color:#23262b;">5</div>
<div class="tx" style="left:371.00px;top:810.05px;font-size:15.8px;line-height:19px;font-weight:400;color:#23262b;transform:scaleX(1.0914);transform-origin:0 0;">006</div>
<div class="tx" style="left:484.70px;top:810.05px;font-size:15.8px;line-height:19px;font-weight:400;color:#23262b;transform:scaleX(1.1427);transform-origin:0 0;">Themba Tonyela</div>
<div class="tx" style="left:749.94px;top:811.77px;font-size:14.3px;line-height:17px;font-weight:400;color:#23262b;transform:scaleX(1.0621);transform-origin:0 0;">Present</div>
<div class="tx" style="left:832.40px;top:811.77px;font-size:14.3px;line-height:17px;font-weight:400;color:#23262b;transform:scaleX(1.0732);transform-origin:0 0;">Absent</div>
<div class="tx" style="left:909.35px;top:811.77px;font-size:14.3px;line-height:17px;font-weight:400;color:#23262b;transform:scaleX(1.0456);transform-origin:0 0;">Late</div>
<div class="tx" style="left:1068.35px;top:811.66px;font-size:14.6px;line-height:18px;font-weight:400;color:#8e9197;transform:scaleX(1.0500);transform-origin:0 0;">Present</div>
<div class="tx" style="left:252.04px;top:869.04px;font-size:14.6px;line-height:18px;font-weight:400;color:#565b62;transform:scaleX(1.0613);transform-origin:0 0;">If student absent then Send SMS to his/her</div>
<div class="tx" style="left:253.10px;top:889.44px;font-size:14.6px;line-height:18px;font-weight:400;color:#565b62;transform:scaleX(1.1038);transform-origin:0 0;">parents</div>
<div class="tx" style="left:444.60px;top:945.46px;font-size:16px;line-height:19px;font-weight:400;color:#fff;transform:scaleX(0.9460);transform-origin:0 0;-webkit-text-stroke:0.35px #fff;">SAVE  ATTENDANCE</div>
<div class="tx" style="left:492.50px;top:1037.20px;font-size:15px;line-height:18px;font-weight:400;color:#a4a4a6;transform:scaleX(1.1080);transform-origin:0 0;">Copyright ©2022 Mojoomla. All rights reserved.</div>
</body></html>
